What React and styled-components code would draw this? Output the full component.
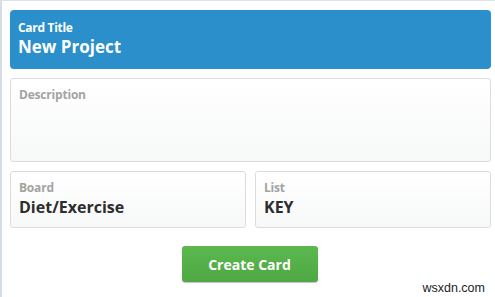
import React from 'react';
import styled, { createGlobalStyle } from 'styled-components';

const GlobalStyle = createGlobalStyle`
  html, body {
    margin: 0;
    padding: 0;
    background: #ffffff;
  }
  body {
    font-family: "Open Sans", "Noto Sans", sans-serif;
  }
`;

const Page = styled.div`
  width: 495px;
  height: 297px;
  box-sizing: border-box;
  border-top: 1px solid #dde3ea;
  border-left: 2px solid #d5dde6;
  padding: 9px 4px 0 8px;
  display: flex;
  flex-direction: column;
  gap: 9px;
  position: relative;
  overflow: hidden;
`;

const Header = styled.div`
  height: 59px;
  background: #2a8fca;
  border-radius: 4px;
  padding: 10px 8px 0;
  box-sizing: border-box;
  color: #ffffff;
  display: flex;
  flex-direction: column;
`;

const HeaderLabel = styled.div`
  font-size: 12px;
  font-weight: 700;
  line-height: 16px;
  letter-spacing: -0.3px;
`;

const HeaderValue = styled.div`
  font-size: 17px;
  font-weight: 700;
  line-height: 22px;
`;

const Field = styled.div`
  height: ${(p) => p.$h}px;
  box-sizing: border-box;
  border: 1px solid #dcdcdc;
  border-radius: 3px;
  background: linear-gradient(#ffffff, #f7f8f8);
  padding: 7px 8px 0;
  display: flex;
  flex-direction: column;
  min-width: 0;
`;

const FieldLabel = styled.div`
  font-size: 12px;
  font-weight: 700;
  color: #a3a3a3;
  line-height: 17px;
  letter-spacing: -0.2px;
`;

const FieldValue = styled.div`
  font-size: 16px;
  font-weight: 700;
  color: #2d2d2d;
  line-height: 22px;
`;

const Row = styled.div`
  display: grid;
  grid-template-columns: 1fr 1fr;
  gap: 9px;
`;

const Actions = styled.div`
  display: flex;
  justify-content: center;
  padding-top: 9px;
  padding-right: 2px;
`;

const Button = styled.button`
  width: 136px;
  height: 36px;
  border: none;
  border-radius: 3px;
  background: linear-gradient(#5cb84f, #4ea843);
  box-shadow: 0 1px 1px rgba(0, 0, 0, 0.25);
  color: #ffffff;
  font-family: "Open Sans", "Noto Sans", sans-serif;
  font-size: 14px;
  font-weight: 700;
`;

const Watermark = styled.div`
  position: absolute;
  right: 10px;
  bottom: 2px;
  font-family: "Liberation Sans", Arial, sans-serif;
  font-size: 12.5px;
  color: #222;
`;

export default function App() {
  return (
    <>
      <GlobalStyle />
      <Page>
        <Header>
          <HeaderLabel>Card Title</HeaderLabel>
          <HeaderValue>New Project</HeaderValue>
        </Header>
        <Field $h={84}>
          <FieldLabel>Description</FieldLabel>
        </Field>
        <Row>
          <Field $h={57}>
            <FieldLabel>Board</FieldLabel>
            <FieldValue>Diet/Exercise</FieldValue>
          </Field>
          <Field $h={57}>
            <FieldLabel>List</FieldLabel>
            <FieldValue>KEY</FieldValue>
          </Field>
        </Row>
        <Actions>
          <Button>Create Card</Button>
        </Actions>
        <Watermark>wsxdn.com</Watermark>
      </Page>
    </>
  );
}
